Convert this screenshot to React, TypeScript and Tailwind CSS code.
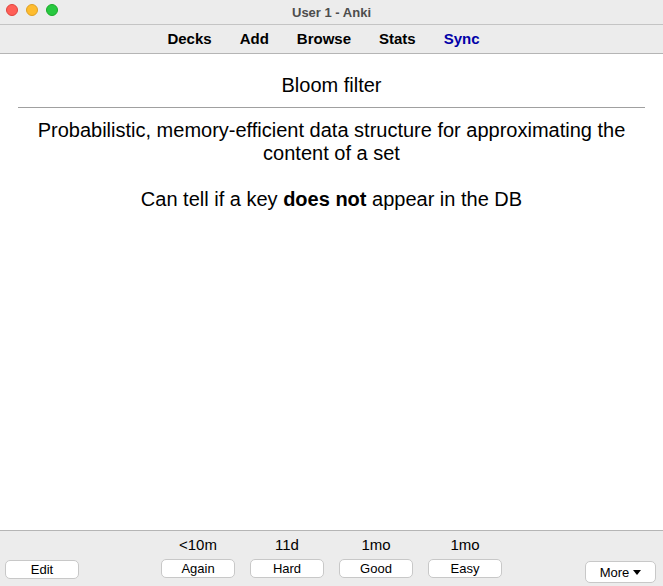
import React from "react";

const answers = [
  { due: "<10m", label: "Again" },
  { due: "11d", label: "Hard" },
  { due: "1mo", label: "Good" },
  { due: "1mo", label: "Easy" },
];

const navItems = ["Decks", "Add", "Browse", "Stats"];

const TrafficLights: React.FC = () => (
  <div className="absolute left-[6px] top-[4px] flex gap-[8px]">
    <span className="block h-[12px] w-[12px] rounded-full border border-[#e0443e] bg-[#ff5f57]" />
    <span className="block h-[12px] w-[12px] rounded-full border border-[#dea123] bg-[#febc2e]" />
    <span className="block h-[12px] w-[12px] rounded-full border border-[#1aab29] bg-[#28c840]" />
  </div>
);

const App: React.FC = () => {
  return (
    <div
      className="flex h-[586px] w-[663px] flex-col overflow-hidden bg-white text-black"
      style={{ fontFamily: '"Liberation Sans", Arial, sans-serif' }}
    >
      {/* window title bar */}
      <div className="relative flex h-[25px] shrink-0 items-center justify-center border-b border-[#c4c4c4] bg-[#ececec]">
        <TrafficLights />
        <span className="text-[13px] font-bold leading-none text-[#4d4d4d]">User 1 - Anki</span>
      </div>

      {/* top toolbar */}
      <div className="flex h-[29px] shrink-0 items-center justify-center gap-[28px] border-b border-[#b5b5b5] bg-[#ececec] pb-[2px] pr-[16px]">
        {navItems.map((item) => (
          <span key={item} className="text-[15px] font-bold leading-none">
            {item}
          </span>
        ))}
        <span className="text-[15px] font-bold leading-none text-[#0000a8]">Sync</span>
      </div>

      {/* card */}
      <div className="flex-1 px-[18px] pt-[20px] text-center text-[20px]">
        <div className="leading-[23px]">Bloom filter</div>
        <hr className="mt-[10px] border-t border-[#a0a0a0]" />
        <div className="mt-[11px] leading-[23px]">
          Probabilistic, memory-efficient data structure for approximating the content of a set
          <br />
          <br />
          Can tell if a key <b>does not</b> appear in the DB
        </div>
      </div>

      {/* answer bar */}
      <div className="grid h-[56px] shrink-0 grid-cols-[1fr_auto_1fr] border-t border-[#b5b5b5] bg-[#ececec] text-[13px]">
        <div className="flex items-end pb-[7px] pl-[5px]">
          <button className="h-[19px] w-[74px] rounded-[5px] border border-[#c8c8c8] bg-white leading-none">
            Edit
          </button>
        </div>
        <div className="flex pt-[5px]">
          {answers.map((a) => (
            <div key={a.label} className="flex w-[89px] flex-col items-center">
              <span className="h-[17px] text-[15px] leading-[17px]">{a.due}</span>
              <button className="mt-[6px] h-[19px] w-[74px] rounded-[5px] border border-[#c8c8c8] bg-white leading-none">
                {a.label}
              </button>
            </div>
          ))}
        </div>
        <div className="flex items-end justify-end pb-[3px] pr-[7px]">
          <button className="flex h-[22px] w-[71px] items-center justify-center gap-[4px] rounded-[5px] border border-[#c8c8c8] bg-white leading-none">
            More
            <svg width="8" height="5" viewBox="0 0 8 5">
              <path d="M0 0 L8 0 L4 5 Z" fill="#000" />
            </svg>
          </button>
        </div>
      </div>
    </div>
  );
};

export default App;
